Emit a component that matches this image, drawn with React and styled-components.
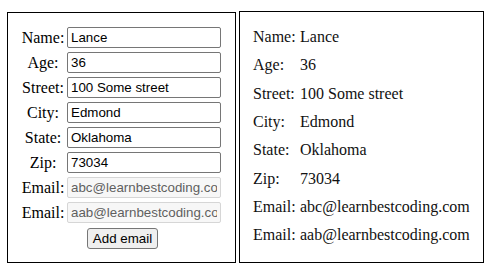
import React from 'react';
import styled, { createGlobalStyle } from 'styled-components';

const person = {
  name: 'Lance',
  age: '36',
  street: '100 Some street',
  city: 'Edmond',
  state: 'Oklahoma',
  zip: '73034',
  emails: ['abc@learnbestcoding.com', 'aab@learnbestcoding.com'],
};

const fields = [
  { key: 'name', label: 'Name:' },
  { key: 'age', label: 'Age:' },
  { key: 'street', label: 'Street:' },
  { key: 'city', label: 'City:' },
  { key: 'state', label: 'State:' },
  { key: 'zip', label: 'Zip:' },
];

const App = () => {
  return (
    <>
      <GlobalStyle />
      <MainWrapper>
        <FormPanel>
          <FormGrid>
            {fields.map((field) => (
              <React.Fragment key={field.key}>
                <FieldLabel>{field.label}</FieldLabel>
                <TextInput defaultValue={person[field.key]} />
              </React.Fragment>
            ))}
            {person.emails.map((email) => (
              <React.Fragment key={email}>
                <FieldLabel>Email:</FieldLabel>
                <TextInput defaultValue={email} disabled />
              </React.Fragment>
            ))}
          </FormGrid>
          <ButtonRow>
            <AddButton type="button">Add email</AddButton>
          </ButtonRow>
        </FormPanel>

        <PreviewPanel>
          {fields.map((field) => (
            <React.Fragment key={field.key}>
              <PreviewLabel>{field.label}</PreviewLabel>
              <PreviewValue>{person[field.key]}</PreviewValue>
            </React.Fragment>
          ))}
          {person.emails.map((email) => (
            <React.Fragment key={email}>
              <PreviewLabel>Email:</PreviewLabel>
              <PreviewValue>{email}</PreviewValue>
            </React.Fragment>
          ))}
        </PreviewPanel>
      </MainWrapper>
    </>
  );
};

export default App;

const GlobalStyle = createGlobalStyle`
  body {
    margin: 0;
    background: #fff;
    font-family: 'Liberation Serif', 'Times New Roman', serif;
    color: #000;
  }
`;

const MainWrapper = styled.div`
  display: flex;
  align-items: flex-start;
  gap: 3px;
  padding: 11px 0 0 7px;
`;

const FormPanel = styled.div`
  box-sizing: border-box;
  width: 229px;
  height: 251px;
  margin-top: 1px;
  border: 1px solid #000;
  padding: 14px 13px 0 13px;
`;

const FormGrid = styled.div`
  display: grid;
  grid-template-columns: 44px 154px;
  column-gap: 2px;
  row-gap: 4px;
  align-items: center;
`;

const FieldLabel = styled.label`
  font-size: 16px;
  text-align: center;
  white-space: nowrap;
`;

const TextInput = styled.input`
  box-sizing: border-box;
  width: 154px;
  height: 21px;
  padding: 1px 3px;
  border: 1px solid #767676;
  border-radius: 2px;
  font-family: 'Liberation Sans', Arial, sans-serif;
  font-size: 13.33px;
  color: #000;
  background: #fff;

  &:disabled {
    border-color: #d6d6d6;
    background: #f7f7f7;
    color: #5f5f5f;
  }
`;

const ButtonRow = styled.div`
  display: flex;
  justify-content: center;
  margin-top: 5px;
  padding-left: 2px;
`;

const AddButton = styled.button`
  box-sizing: border-box;
  height: 21px;
  padding: 1px 5px;
  border: 1px solid #767676;
  border-radius: 3px;
  background: #efefef;
  font-family: 'Liberation Sans', Arial, sans-serif;
  font-size: 13.33px;
  color: #000;
`;

const PreviewPanel = styled.div`
  box-sizing: border-box;
  width: 245px;
  height: 252px;
  border: 1px solid #000;
  padding: 11px 13px 0 13px;
  display: grid;
  grid-template-columns: 43px 1fr;
  grid-auto-rows: 28.3px;
  column-gap: 4px;
  align-content: start;
  align-items: center;
  font-size: 16px;
  color: #111;
`;

const PreviewLabel = styled.span`
  white-space: nowrap;
`;

const PreviewValue = styled.span`
  white-space: nowrap;
`;
